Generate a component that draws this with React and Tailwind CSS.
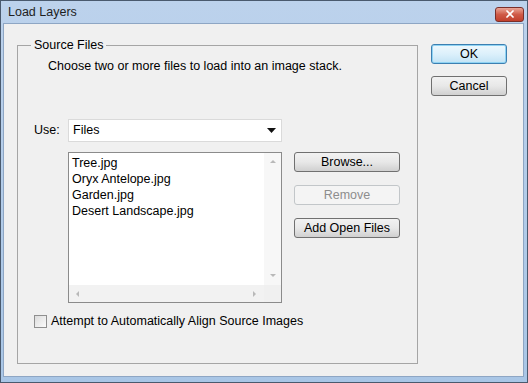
import { X } from "lucide-react";

const font = { fontFamily: '"Liberation Sans", Arial, sans-serif' };

function Button({ children, disabled, primary }) {
  const base =
    "h-[20px] w-full rounded-[3px] border text-[12.5px] leading-none flex items-center justify-center";
  if (disabled)
    return (
      <div className={`${base} border-[#c2c6c9] bg-[#f4f4f4] text-[#8d8d8d]`}>
        {children}
      </div>
    );
  if (primary)
    return (
      <div
        className={`${base} border-[#3c7fb1] bg-gradient-to-b from-[#eef8fd] via-[#dcf0fb] to-[#c2e3f5] text-black shadow-[0_0_0_1px_#8fd3f3_inset]`}
      >
        {children}
      </div>
    );
  return (
    <div
      className={`${base} border-[#707070] bg-gradient-to-b from-[#f2f2f2] via-[#e8e8e8] to-[#d0d0d0] text-black`}
    >
      {children}
    </div>
  );
}

function ScrollArrow({ dir }) {
  const pts = {
    up: "1,5 4,2 7,5",
    down: "1,2 4,5 7,2",
    left: "5,1 2,4 5,7",
    right: "2,1 5,4 2,7",
  }[dir];
  return (
    <svg width="8" height="8" viewBox="0 0 8 8">
      <polygon points={pts} fill="#b9b9b9" />
    </svg>
  );
}

export default function App() {
  const files = ["Tree.jpg", "Oryx Antelope.jpg", "Garden.jpg", "Desert Landscape.jpg"];
  return (
    <div
      style={font}
      className="w-[528px] h-[383px] flex flex-col border border-[#4a5a6e] bg-gradient-to-b from-[#bcd2ec] to-[#a9c6e6] text-black"
    >
      {/* title bar */}
      <div className="h-[22px] flex items-center justify-between pl-[7px] pr-[3px]">
        <span className="text-[12.5px] text-[#1e1e1e]">Load Layers</span>
        <div className="mt-[4px] w-[29px] h-[15px] rounded-[3px] border border-[#7a2f2a] bg-gradient-to-b from-[#e9a597] via-[#cf5a47] to-[#c13f2c] flex items-center justify-center">
          <X size={12} strokeWidth={3.5} color="#fff" />
        </div>
      </div>

      {/* client area */}
      <div className="flex-1 ml-[2px] mr-[3px] mb-[5px] border border-[#8ea6c4] bg-[#f0f0f0] flex gap-[13px] pl-[13px] pr-[14px]">
        <fieldset className="mt-[14px] w-[401px] h-[326px] border border-[#a5a5a5]">
          <legend className="ml-[13px] px-[3px] text-[12.5px] leading-[14px]">Source Files</legend>
          <div className="pl-[30px] mt-[7px] text-[12.5px] leading-[14px]">
            Choose two or more files to load into an image stack.
          </div>

          <div className="flex items-center mt-[46px] pl-[16px]">
            <span className="w-[34px] text-[12.5px]">Use:</span>
            <div className="w-[214px] h-[23px] bg-white border border-[#dadada] flex items-center justify-between pl-[4px] pr-[5px]">
              <span className="text-[12.5px]">Files</span>
              <svg width="9" height="5" viewBox="0 0 9 5">
                <polygon points="0,0 9,0 4.5,5" fill="#111" />
              </svg>
            </div>
          </div>

          <div className="flex mt-[10px] pl-[50px]">
            <div className="w-[214px] h-[151px] border border-[#8b8b8b] bg-white flex flex-col">
              <div className="flex flex-1">
                <div className="flex-1 pl-[3px] pt-[2px] text-[12.5px] leading-[16px]">
                  {files.map((f) => (
                    <div key={f}>{f}</div>
                  ))}
                </div>
                <div className="w-[17px] bg-[#f7f7f7] flex flex-col items-center justify-between py-[5px]">
                  <ScrollArrow dir="up" />
                  <ScrollArrow dir="down" />
                </div>
              </div>
              <div className="h-[17px] flex">
                <div className="flex-1 bg-[#f2f2f2] flex items-center justify-between px-[5px]">
                  <ScrollArrow dir="left" />
                  <ScrollArrow dir="right" />
                </div>
                <div className="w-[17px] bg-[#f0f0f0]" />
              </div>
            </div>

            <div className="ml-[12px] w-[106px] flex flex-col gap-[13px]">
              <Button>Browse...</Button>
              <Button disabled>Remove</Button>
              <Button>Add Open Files</Button>
            </div>
          </div>

          <div className="flex items-center mt-[9px] pl-[16px]">
            <div className="w-[13px] h-[13px] border border-[#8f8f8f] bg-gradient-to-br from-[#dcdcdc] to-[#fbfbfb]" />
            <span className="ml-[4px] text-[12.5px]">Attempt to Automatically Align Source Images</span>
          </div>
        </fieldset>

        <div className="mt-[20px] w-[76px] flex flex-col gap-[12px]">
          <Button primary>OK</Button>
          <Button>Cancel</Button>
        </div>
      </div>
    </div>
  );
}
